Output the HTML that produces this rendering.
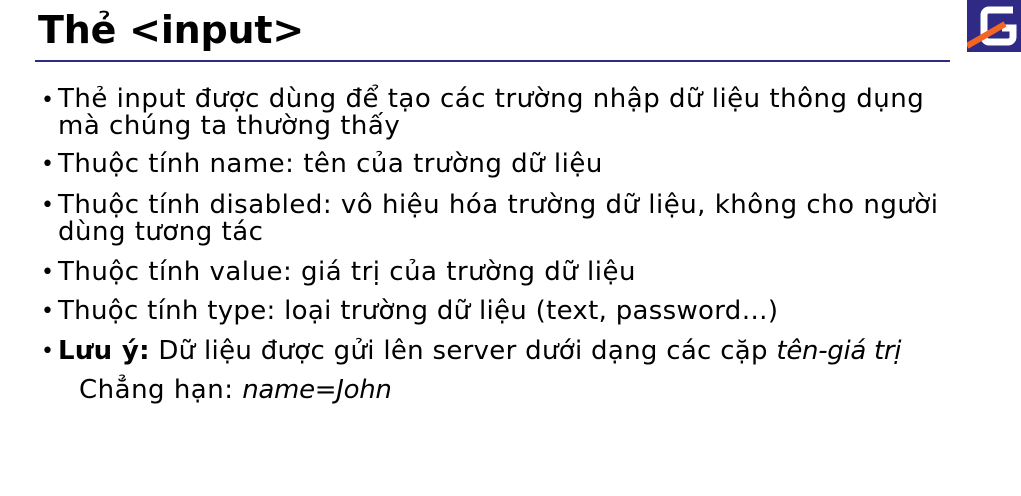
<!DOCTYPE html>
<html><head><meta charset="utf-8"><style>
body{margin:0;width:1021px;height:496px;background:#fff;position:relative;overflow:hidden;font-family:"DejaVu Sans",sans-serif;color:#000}
h1{position:absolute;left:38px;top:8px;margin:0;font-size:38px;font-weight:bold;letter-spacing:-0.2px}
.rule{position:absolute;left:35px;top:60px;width:915px;height:2px;background:#2e2a86}
.logo{position:absolute;left:967px;top:0;width:54px;height:52px;background:#2e2a86}
.t{position:absolute;font-size:26px;line-height:26px;white-space:nowrap;letter-spacing:0.5px}
.t i{letter-spacing:-0.3px}
.b{position:absolute;left:41px;font-size:22px}
</style></head><body>
<h1>Thẻ &lt;input&gt;</h1>
<div class="rule"></div>
<div class="logo"><svg width="54" height="52" viewBox="0 0 54 52">
<path d="M46 10H22a5 5 0 0 0-5 5v22a5 5 0 0 0 5 5h19a5 5 0 0 0 5-5V28H35" fill="none" stroke="#fff" stroke-width="7"/>
<path d="M0 46L38 24" stroke="#f26522" stroke-width="6"/></svg></div>
<div class="b" style="top:88px">•</div><div class="t" style="left:58px;top:86px">Thẻ input được dùng để tạo các trường nhập dữ liệu thông dụng</div>
<div class="t" style="left:58px;top:113px">mà chúng ta thường thấy</div>
<div class="b" style="top:152px">•</div><div class="t" style="left:58px;top:151px">Thuộc tính name: tên của trường dữ liệu</div>
<div class="b" style="top:193px">•</div><div class="t" style="left:58px;top:192px">Thuộc tính disabled: vô hiệu hóa trường dữ liệu, không cho người</div>
<div class="t" style="left:58px;top:219px">dùng tương tác</div>
<div class="b" style="top:260px">•</div><div class="t" style="left:58px;top:259px">Thuộc tính value: giá trị của trường dữ liệu</div>
<div class="b" style="top:299px">•</div><div class="t" style="left:58px;top:298px;letter-spacing:0.3px">Thuộc tính type: loại trường dữ liệu (text, password…)</div>
<div class="b" style="top:339px">•</div><div class="t" style="left:58px;top:338px;letter-spacing:0.3px"><b>Lưu ý:</b> Dữ liệu được gửi lên server dưới dạng các cặp <i>tên-giá trị</i></div>
<div class="t" style="left:79px;top:377px">Chẳng hạn: <i>name=John</i></div>
</body></html>
